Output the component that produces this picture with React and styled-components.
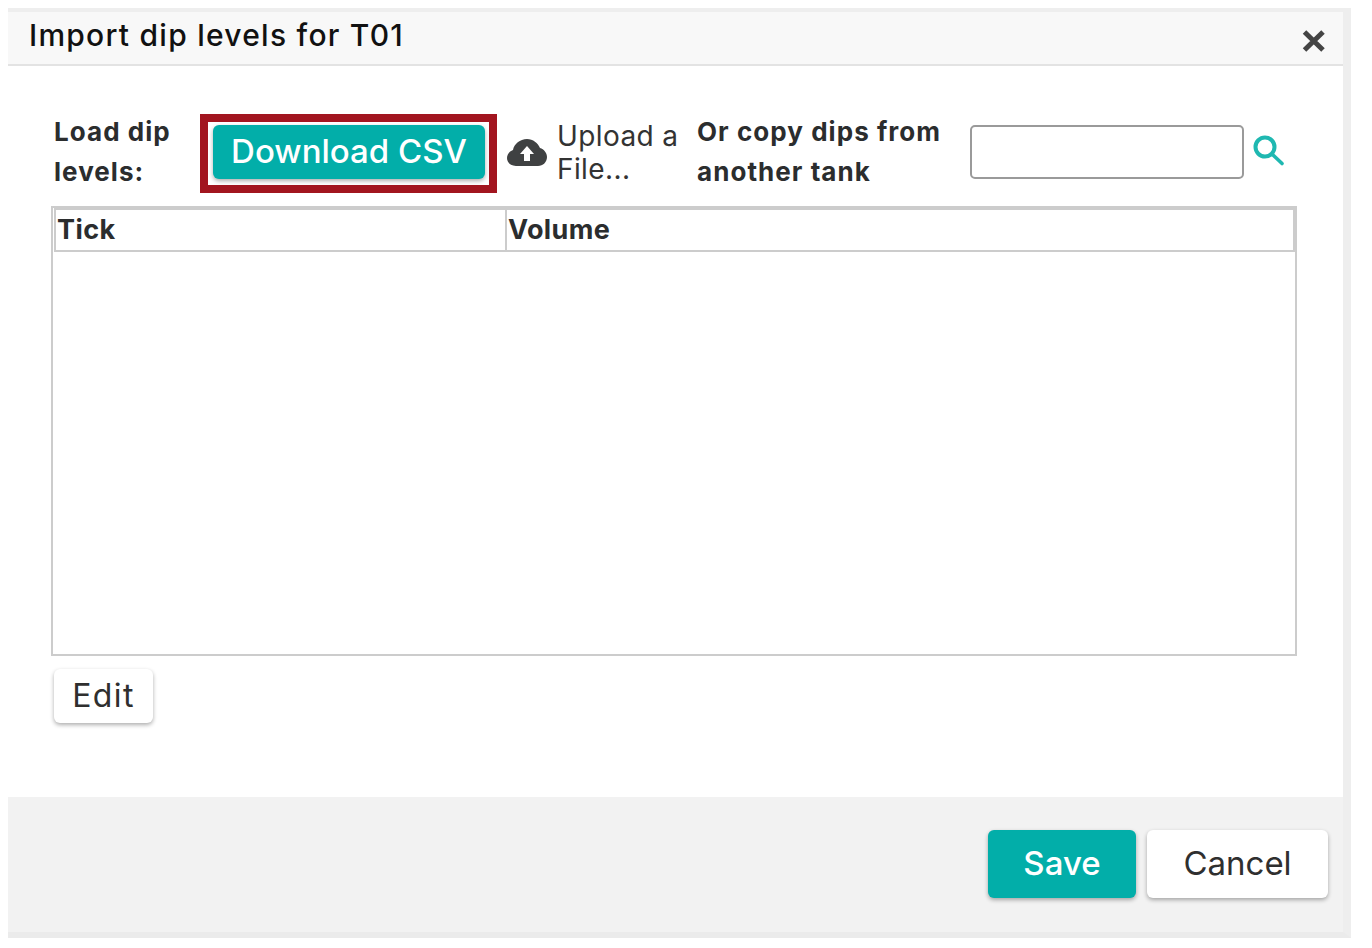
import React from "react";
import styled, { createGlobalStyle } from "styled-components";

const Global = createGlobalStyle`
  html, body { margin: 0; padding: 0; background: #fff; }
  body { padding: 8px 0 0 8px; font-family: Inter, "Open Sans", "Liberation Sans", sans-serif; color: #2b2b2b; }
  * { box-sizing: border-box; }
`;

const Dialog = styled.div`
  width: 1343px;
  height: 930px;
  display: flex;
  flex-direction: column;
  background: #fff;
  border-top: 4px solid #eeeeee;
  border-right: 8px solid #eeeeee;
  border-bottom: 6px solid #ebebeb;
  box-shadow: 0 3px 0 #e2e2e2;
`;

const Header = styled.header`
  height: 54px;
  flex: none;
  display: flex;
  align-items: flex-start;
  justify-content: space-between;
  background: #f8f8f8;
  border-bottom: 2px solid #e3e3e3;
  padding: 0 17px 0 21px;
`;

const Title = styled.h1`
  margin: 0;
  font-size: 30px;
  line-height: 46px;
  font-weight: 500;
  color: #111;
  letter-spacing: 1.25px;
`;

const CloseBtn = styled.svg`
  width: 24px;
  height: 24px;
  margin-top: 17px;
  flex: none;
`;

const Body = styled.main`
  flex: 1;
  padding: 48px 46px 0 43px;
`;

const Toolbar = styled.div`
  height: 79px;
  display: flex;
  align-items: flex-start;
`;

const BoldLabel = styled.div`
  font-size: 26px;
  font-weight: 700;
  line-height: 40px;
  color: #2b2d2e;
  letter-spacing: 1.05px;
  white-space: nowrap;
  width: ${(p) => p.$w}px;
  margin-left: ${(p) => p.$ml || 0}px;
  margin-top: -2px;
  flex: none;
`;

const Highlight = styled.div`
  width: 297px;
  height: 79px;
  flex: none;
  border: 8px solid #a2151f;
  background: #fff;
  padding: 3px 4px 0 5px;
`;

const Button = styled.button`
  font-family: inherit;
  border: none;
  border-radius: 6px;
  cursor: pointer;
  background: ${(p) => (p.$primary ? "#02aea9" : "#fff")};
  color: ${(p) => (p.$primary ? "#fff" : "#2f2f2f")};
  font-weight: ${(p) => (p.$primary ? 500 : 400)};
  box-shadow: 0 2px 4px rgba(0, 0, 0, 0.32);
  font-size: ${(p) => p.$fs || 33}px;
  letter-spacing: ${(p) => p.$ls || 0}px;
  width: ${(p) => p.$w}px;
  height: ${(p) => p.$h}px;
  padding: 0 0 2px;
  flex: none;
`;

const UploadGroup = styled.div`
  display: flex;
  align-items: flex-start;
  margin-left: 10px;
  width: 190px;
  flex: none;
`;

const UploadText = styled.div`
  font-size: 28px;
  line-height: 33px;
  letter-spacing: 0.4px;
  color: #333;
  margin: 6px 0 0 10px;
  white-space: nowrap;
`;

const SearchInput = styled.input`
  width: 274px;
  height: 54px;
  margin: 11px 0 0 29px;
  flex: none;
  border: 2px solid #9a9a9a;
  border-radius: 5px;
  background: #fff;
`;

const SearchIcon = styled.svg`
  width: 32px;
  height: 32px;
  margin: 21px 0 0 9px;
  flex: none;
`;

const Table = styled.div`
  margin-top: 13px;
  width: 1246px;
  height: 450px;
  border: 2px solid #cccccc;
  padding-left: 1px;
`;

const TableHead = styled.div`
  height: 44px;
  display: grid;
  grid-template-columns: 449px 1fr;
  border: 2px solid #cccccc;
`;

const HeadCell = styled.div`
  font-size: 27px;
  font-weight: 700;
  line-height: 40px;
  letter-spacing: 0.4px;
  color: #2b2d2e;
  padding-left: 1px;
  & + & { border-left: 2px solid #cccccc; }
`;

const EditBtn = styled(Button)`
  display: block;
  margin: 13px 0 0 3px;
`;

const Footer = styled.footer`
  height: 135px;
  flex: none;
  background: #f2f2f2;
  display: flex;
  justify-content: flex-end;
  gap: 11px;
  padding: 33px 15px 0 0;
`;

export default function App() {
  return (
    <>
      <Global />
      <Dialog>
        <Header>
          <Title>Import dip levels for T01</Title>
          <CloseBtn viewBox="0 0 24 24" aria-label="close">
            <path d="M2.5 3 L21 21 M21 3 L2.5 21" stroke="#444" strokeWidth="5" fill="none" />
          </CloseBtn>
        </Header>
        <Body>
          <Toolbar>
            <BoldLabel $w={146} $ml={3}>Load dip<br />levels:</BoldLabel>
            <Highlight>
              <Button $primary $w={272} $h={54}>Download CSV</Button>
            </Highlight>
            <UploadGroup>
              <svg width="40" height="76" viewBox="0 0 40 76" aria-hidden="true">
                <path
                  d="M9 52 C3 52 0 48 0 44 C0 40 3 37 6 36 C7 30 13 25 20 25 C26 25 31 29 33 34 C37 35 40 39 40 43 C40 48 36 52 31 52 Z"
                  fill="#3f4142"
                />
                <path d="M20 32 L27 40 L23 40 L23 47 L17 47 L17 40 L13 40 Z" fill="#fff" />
              </svg>
              <UploadText>Upload a<br />File...</UploadText>
            </UploadGroup>
            <BoldLabel $w={244}>Or copy dips from<br />another tank</BoldLabel>
            <SearchInput />
            <SearchIcon viewBox="0 0 32 32" aria-label="search">
              <circle cx="12" cy="12" r="9.5" fill="none" stroke="#1fb8b1" strokeWidth="4" />
              <path d="M19.5 19.5 L29 28.5" stroke="#1fb8b1" strokeWidth="3.6" strokeLinecap="round" />
            </SearchIcon>
          </Toolbar>
          <Table>
            <TableHead>
              <HeadCell>Tick</HeadCell>
              <HeadCell>Volume</HeadCell>
            </TableHead>
          </Table>
          <EditBtn $w={99} $h={54} $fs={32} $ls={1.4}>Edit</EditBtn>
        </Body>
        <Footer>
          <Button $primary $w={148} $h={68}>Save</Button>
          <Button $w={181} $h={68}>Cancel</Button>
        </Footer>
      </Dialog>
    </>
  );
}
